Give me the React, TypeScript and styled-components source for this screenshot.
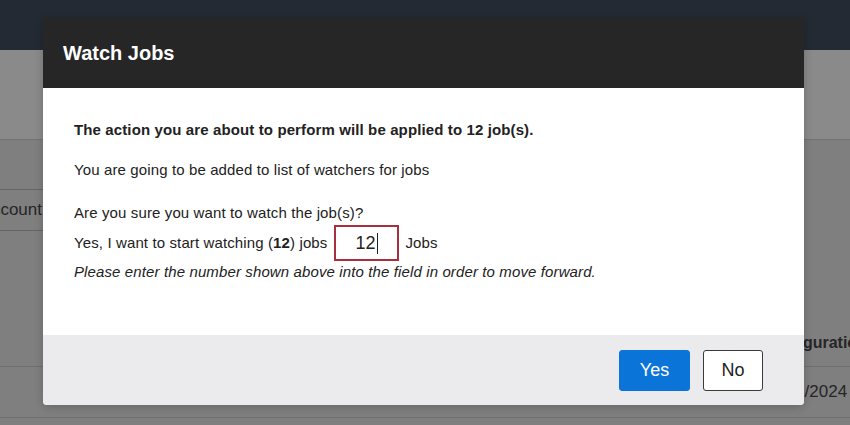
import React from "react";
import styled, { createGlobalStyle } from "styled-components";

const Global = createGlobalStyle`
  html, body { margin: 0; padding: 0; }
  body {
    width: 850px;
    height: 425px;
    overflow: hidden;
    font-family: "Liberation Sans", Arial, Helvetica, sans-serif;
    background: #808080;
  }
  * { box-sizing: border-box; }
`;

const Page = styled.div`
  position: relative;
  width: 850px;
  height: 425px;
  overflow: hidden;
  background: #7f7f7f;
`;

const NavBar = styled.div`
  height: 50px;
  background: #232a33;
`;

const SubHeader = styled.div`
  height: 90px;
  background: #8a8a8a;
  border-bottom: 1px solid #727272;
`;

const Content = styled.div`
  display: flex;
  flex-direction: column;
`;

const SearchRow = styled.div`
  padding-top: 49px;
  height: 180px;
`;

const SearchBox = styled.div`
  width: 200px;
  margin-left: -150px;
  height: 42px;
  border: 1px solid #656565;
  border-left: none;
  display: flex;
  align-items: center;
  justify-content: flex-end;
  padding-right: 7px;
  font-size: 17px;
  color: #262626;
`;

const TableRow = styled.div<{ $head?: boolean }>`
  height: ${(p) => (p.$head ? "47px" : "51px")};
  border-bottom: 1px solid #6f6f6f;
  display: grid;
  grid-template-columns: 762px 1fr;
  align-items: center;
  font-size: ${(p) => (p.$head ? "16px" : "17px")};
  font-weight: ${(p) => (p.$head ? 700 : 400)};
  color: #262626;
  white-space: nowrap;
  overflow: hidden;
`;

const Cell = styled.div`
  overflow: hidden;
`;

const Modal = styled.div`
  position: absolute;
  left: 43px;
  top: 18px;
  width: 761px;
  height: 387px;
  display: flex;
  flex-direction: column;
  background: #ffffff;
  border-radius: 0 0 4px 4px;
  overflow: hidden;
  box-shadow: 0 2px 10px rgba(0, 0, 0, 0.2);
`;

const ModalHeader = styled.div`
  height: 70px;
  flex: none;
  background: #262626;
  display: flex;
  align-items: center;
  padding-left: 20px;
`;

const Title = styled.h2`
  margin: 0;
  color: #ffffff;
  font-size: 20px;
  font-weight: 700;
`;

const ModalBody = styled.div`
  flex: 1;
  padding: 32px 31px 0;
  color: #222222;
  font-size: 15px;
  letter-spacing: 0.12px;
`;

const Line = styled.p<{ $gap: number; $bold?: boolean; $italic?: boolean }>`
  margin: ${(p) => p.$gap}px 0 0;
  line-height: 20px;
  font-weight: ${(p) => (p.$bold ? 700 : 400)};
  font-style: ${(p) => (p.$italic ? "italic" : "normal")};
`;

const ConfirmRow = styled.div`
  margin-top: 2px;
  display: flex;
  align-items: center;
  gap: 6px;
  height: 36px;
  line-height: 20px;
`;

const NumberBox = styled.div`
  width: 65px;
  height: 36px;
  margin-left: 1px;
  border: 2px solid #a82f3e;
  display: flex;
  align-items: center;
  justify-content: center;
  font-size: 18px;
  letter-spacing: 0;
  color: #222222;
  &::after {
    content: "";
    width: 1px;
    height: 21px;
    background: #222222;
    margin-left: 2px;
  }
`;

const ModalFooter = styled.div`
  height: 70px;
  flex: none;
  background: #ebebed;
  display: flex;
  align-items: center;
  justify-content: flex-end;
  gap: 13px;
  padding-right: 41px;
`;

const Button = styled.button<{ $primary?: boolean }>`
  height: 41px;
  padding: 0;
  width: ${(p) => (p.$primary ? "71px" : "60px")};
  border-radius: 3px;
  font-family: "Liberation Sans", Arial, Helvetica, sans-serif;
  font-size: 18px;
  cursor: pointer;
  background: ${(p) => (p.$primary ? "#0b74d8" : "#ffffff")};
  color: ${(p) => (p.$primary ? "#ffffff" : "#222222")};
  border: 1px solid ${(p) => (p.$primary ? "#0b74d8" : "#3a3a3a")};
`;

export default function App() {
  return (
    <>
      <Global />
      <Page>
        <NavBar />
        <SubHeader />
        <Content>
          <SearchRow>
            <SearchBox>Account</SearchBox>
          </SearchRow>
          <TableRow $head>
            <span />
            <Cell>Configuration</Cell>
          </TableRow>
          <TableRow>
            <span />
            <Cell>12/05/2024</Cell>
          </TableRow>
        </Content>
        <Modal>
          <ModalHeader>
            <Title>Watch Jobs</Title>
          </ModalHeader>
          <ModalBody>
            <Line $gap={0} $bold>
              The action you are about to perform will be applied to 12 job(s).
            </Line>
            <Line $gap={20}>You are going to be added to list of watchers for jobs</Line>
            <Line $gap={23}>Are you sure you want to watch the job(s)?</Line>
            <ConfirmRow>
              <span>
                Yes, I want to start watching (<b>12</b>) jobs
              </span>
              <NumberBox>12</NumberBox>
              <span>Jobs</span>
            </ConfirmRow>
            <Line $gap={1} $italic>
              Please enter the number shown above into the field in order to move forward.
            </Line>
          </ModalBody>
          <ModalFooter>
            <Button $primary>Yes</Button>
            <Button>No</Button>
          </ModalFooter>
        </Modal>
      </Page>
    </>
  );
}
